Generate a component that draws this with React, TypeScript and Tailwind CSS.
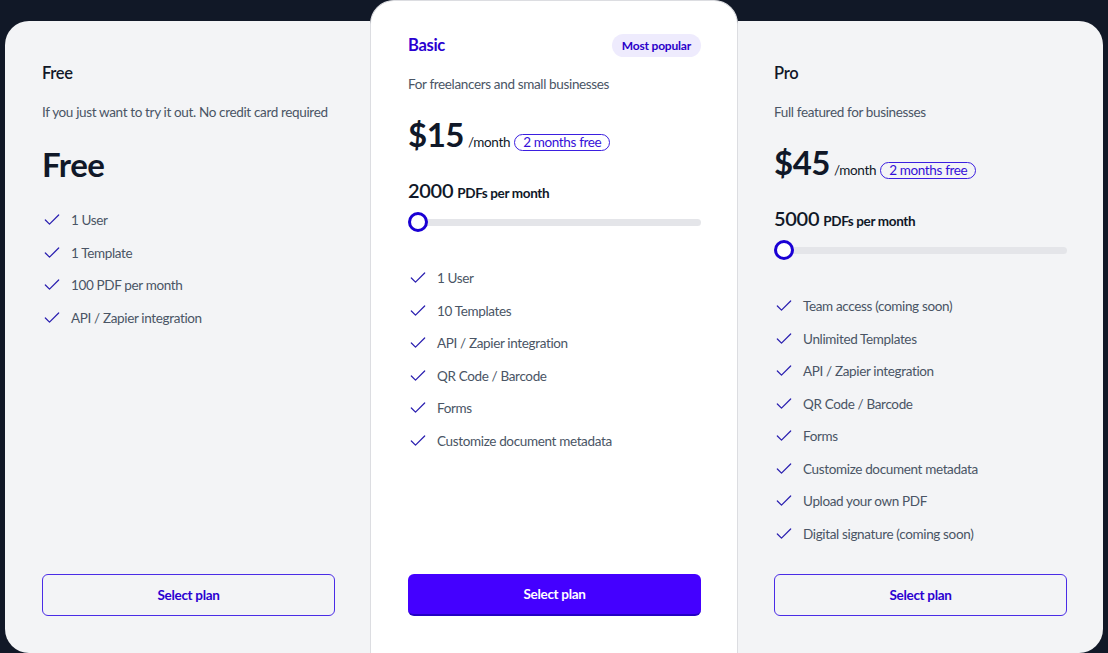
import { Check } from "lucide-react";

type Plan = {
  name: string;
  description: string;
  price: string;
  pdfs?: string;
  features: string[];
  featured?: boolean;
};

const plans: Plan[] = [
  {
    name: "Free",
    description: "If you just want to try it out. No credit card required",
    price: "Free",
    features: ["1 User", "1 Template", "100 PDF per month", "API / Zapier integration"],
  },
  {
    name: "Basic",
    description: "For freelancers and small businesses",
    price: "$15",
    pdfs: "2000",
    featured: true,
    features: ["1 User", "10 Templates", "API / Zapier integration", "QR Code / Barcode", "Forms", "Customize document metadata"],
  },
  {
    name: "Pro",
    description: "Full featured for businesses",
    price: "$45",
    pdfs: "5000",
    features: [
      "Team access (coming soon)",
      "Unlimited Templates",
      "API / Zapier integration",
      "QR Code / Barcode",
      "Forms",
      "Customize document metadata",
      "Upload your own PDF",
      "Digital signature (coming soon)",
    ],
  },
];

function Slider() {
  return (
    <div className="relative mt-[5px] flex h-5 items-center">
      <div className="h-[7px] w-full rounded-full bg-[#e4e5e9]" />
      <div className="absolute left-0 top-0 size-5 rounded-full border-[3px] border-[#1a00d4] bg-white" />
    </div>
  );
}

function PlanCard({ plan, className }: { plan: Plan; className: string }) {
  const paid = plan.pdfs !== undefined;
  return (
    <div className={className}>
      <div className="flex items-center justify-between">
        <h3
          className={
            plan.featured
              ? "text-[16.5px] font-bold leading-6 tracking-[-0.3px] text-[#2a00d1]"
              : "text-[16.5px] font-semibold leading-6 tracking-[-0.3px] text-gray-900"
          }
        >
          {plan.name}
        </h3>
        {plan.featured ? (
          <span className="rounded-full bg-[#eeebfd] px-[10px] py-[3px] text-[12px] font-bold leading-[17px] tracking-[-0.2px] text-[#2a00c9]">Most popular</span>
        ) : null}
      </div>
      <p className="mt-[15px] text-[13.5px] leading-6 tracking-[-0.35px] text-gray-600">{plan.description}</p>
      <div className={paid ? "mt-[18px] flex items-baseline gap-1" : "mt-5 flex items-baseline gap-1"}>
        <span className="text-[33px] font-bold leading-10 tracking-[-0.5px] text-gray-900">{plan.price}</span>
        {paid ? (
          <>
            <span className="text-[13.5px] tracking-[-0.35px] text-gray-900">/month</span>
            <span className="rounded-full border border-[#3b1fe0] px-2 text-[13.5px] leading-[15px] tracking-[-0.35px] text-[#3510d8]">2 months free</span>
          </>
        ) : null}
      </div>
      {paid ? (
        <>
          <p className="mt-[22px] flex items-baseline gap-1 leading-7 text-gray-900">
            <span className="text-[20px] font-semibold tracking-[-0.3px]">{plan.pdfs}</span>
            <span className="text-[13.5px] font-bold tracking-[-0.35px]">PDFs per month</span>
          </p>
          <Slider />
        </>
      ) : null}
      <ul className={paid ? "mt-[36px] flex flex-col gap-3" : "mt-[26px] flex flex-col gap-3"}>
        {plan.features.map((f) => (
          <li key={f} className="flex items-center gap-[9px] text-[13.5px] leading-[20.5px] tracking-[-0.35px] text-gray-600">
            <Check size={20} strokeWidth={1.5} className="shrink-0 text-[#2a1fb0]" />
            {f}
          </li>
        ))}
      </ul>
      <button
        type="button"
        className={
          plan.featured
            ? "mt-auto h-[42px] w-full rounded-md border-b-2 border-[#2400c4] bg-[#4400ff] text-[13.5px] font-bold tracking-[-0.3px] text-white"
            : "mt-auto h-[42px] w-full rounded-md border border-[#4a2ce6] text-[13.5px] font-bold tracking-[-0.3px] text-[#2a00d1]"
        }
      >
        Select plan
      </button>
    </div>
  );
}

export default function App() {
  return (
    <div className="h-[653px] w-[1108px] overflow-hidden bg-[#111827] px-[5px] font-['Lato',sans-serif] antialiased">
      <div className="flex items-start">
        <PlanCard
          plan={plans[0]}
          className="mt-[21px] flex h-[632px] w-[365px] flex-col rounded-l-3xl bg-[#f3f4f6] pb-[37px] pl-[37px] pr-[35px] pt-10"
        />
        <PlanCard
          plan={plans[1]}
          className="flex h-[653px] w-[368px] flex-col rounded-t-3xl border-x border-t border-[#dcdde1] bg-white pb-[37px] pl-[37px] pr-[36px] pt-8"
        />
        <PlanCard
          plan={plans[2]}
          className="mt-[21px] flex h-[632px] w-[365px] flex-col rounded-r-3xl bg-[#f3f4f6] pb-[37px] pl-[36px] pr-[36px] pt-10"
        />
      </div>
    </div>
  );
}
